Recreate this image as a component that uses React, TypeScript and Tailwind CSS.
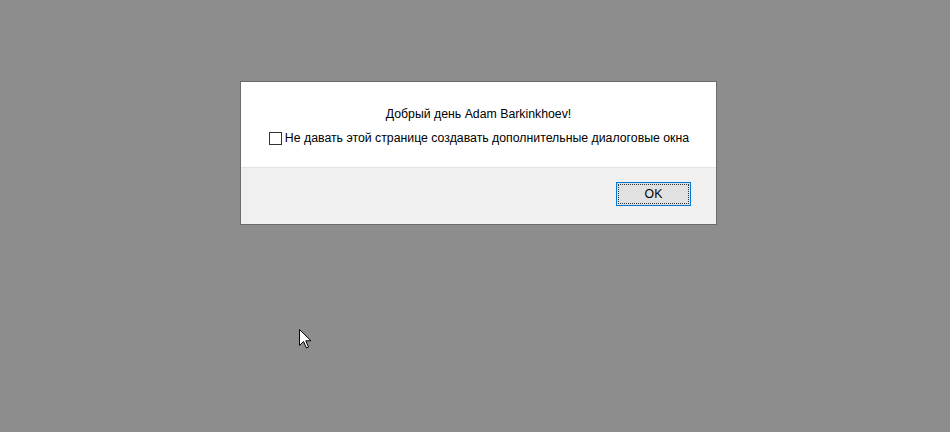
export default function App() {
  return (
    <div
      className="relative h-[432px] w-full overflow-hidden bg-[#8d8d8d] pl-[240px] pt-[81px]"
      style={{ fontFamily: '"Liberation Sans", Arial, sans-serif' }}
    >
      {/* Alert dialog */}
      <div className="w-[477px] border border-[#6b6b6b] bg-white">
        <div className="flex flex-col items-center pb-[21px] pt-[24px] text-[12.3px] leading-[16px] text-[#000]">
          <p>Добрый день Adam Barkinkhoev!</p>
          <label className="mt-[8px] flex items-center gap-[3px] pl-[1px]">
            <span className="h-[13px] w-[13px] border border-[#333] bg-white" />
            <span>Не давать этой странице создавать дополнительные диалоговые окна</span>
          </label>
        </div>
        <div className="flex h-[57px] justify-end border-t border-[#e3e3e3] bg-[#f0f0f0] pr-[25px] pt-[14px]">
          <button className="h-[24px] w-[75px] border border-[#0078d7] bg-[#e1e1e1] p-[1px] text-[12.3px] text-black">
            <span className="flex h-full w-full items-center justify-center outline-1 outline-dotted outline-[#333] -outline-offset-1">
              OK
            </span>
          </button>
        </div>
      </div>

      {/* Mouse cursor */}
      <svg className="absolute left-[299px] top-[329px]" width="13" height="20" viewBox="0 0 13 20">
        <path
          d="M0.5 0.5 L0.5 16.5 L4.5 12.5 L7.5 19 L9.5 18 L6.8 11.8 L12 11.8 Z"
          fill="#fff"
          stroke="#000"
          strokeWidth="1"
          strokeLinejoin="miter"
        />
      </svg>
    </div>
  );
}
